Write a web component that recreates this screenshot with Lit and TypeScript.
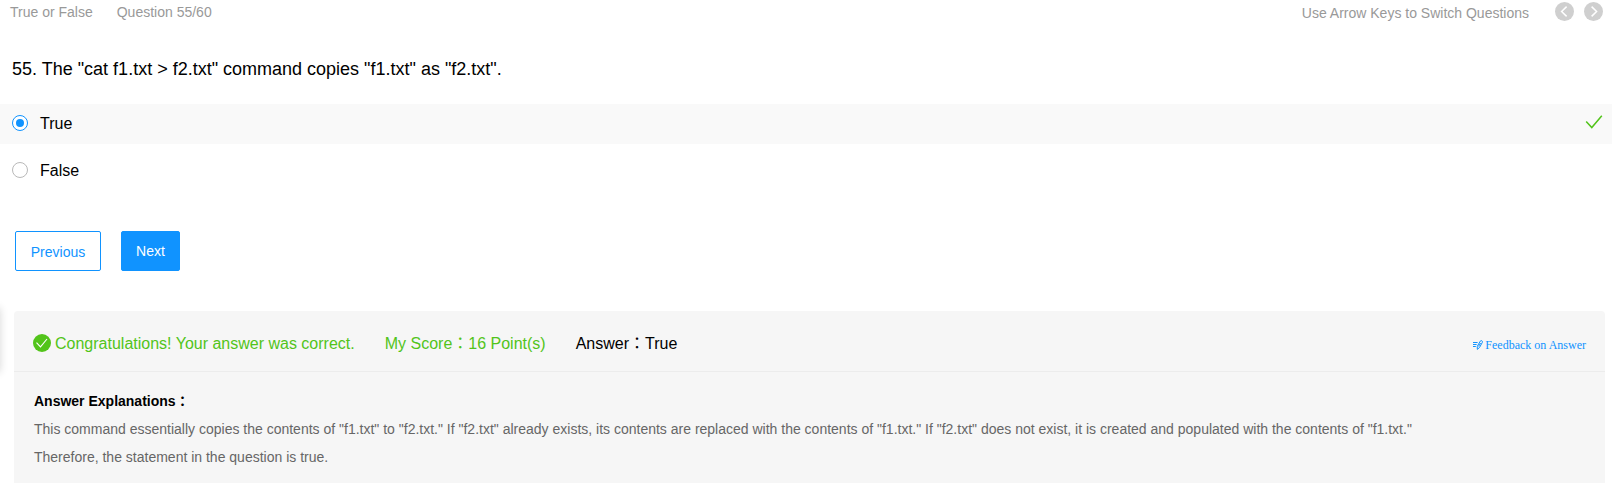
import { LitElement, html, css, svg } from "lit";
import { customElement, property, state } from "lit/decorators.js";

@customElement("answer-option")
class AnswerOption extends LitElement {
  @property() label = "";
  @property({ type: Boolean, reflect: true }) selected = false;
  @property({ type: Boolean }) correct = false;

  static styles = css`
    :host { display: flex; align-items: center; height: 40px; padding: 0 9px 0 12px; cursor: pointer; }
    :host([selected]) { background: #f9f9f9; }
    .radio { box-sizing: border-box; width: 16px; height: 16px; border: 1px solid #b9b9b9; border-radius: 50%;
      background: #fff; display: grid; place-items: center; margin-top: -2px; }
    :host([selected]) .radio { border-color: #1093ff; }
    .dot { width: 8px; height: 8px; border-radius: 50%; background: #1093ff; }
    .label { flex: 1; margin-left: 12px; line-height: 22px; margin-top: -1px; }
    .mark { display: block; margin-top: -4px; }
  `;

  render() {
    return html`
      <span class="radio">${this.selected ? html`<span class="dot"></span>` : null}</span>
      <span class="label">${this.label}</span>
      ${this.correct
        ? html`<svg class="mark" width="18" height="14" viewBox="0 0 18 14" fill="none" stroke="#52c41a" stroke-width="1.5">
            <path d="M1.2 6.4L6.8 12.5L16.8 .8" /></svg>`
        : null}
    `;
  }
}

@customElement("app-root")
class AppRoot extends LitElement {
  @state() private choice = "True";

  static styles = css`
    :host { display: block; height: 483px; overflow: hidden; position: relative; background: #fff; color: #000;
      font: 16px/22px "Liberation Sans", "Noto Sans CJK JP", sans-serif; }
    .top { display: flex; height: 24px; padding: 0 9px 0 10px; font-size: 14px; line-height: 24px; color: #999; }
    .number { flex: 1; margin-left: 24px; }
    .hint { margin-right: 25.5px; padding-top: 1px; }
    .arrow { display: block; margin: 1.5px 0 0; }
    .arrow + .arrow { margin-left: 10.5px; }
    .question { font-size: 18px; line-height: 26px; padding: 32px 12px 22px; }
    .options { display: flex; flex-direction: column; gap: 7px; }
    .actions { display: flex; gap: 20px; padding: 40px 15px; }
    .button { box-sizing: border-box; display: inline-flex; align-items: center; justify-content: center;
      height: 40px; border: 1px solid #1093ff; border-radius: 2px; padding: 0;
      font: 14px/20px "Liberation Sans", sans-serif; color: #1093ff; background: #fff; }
    .previous { padding-top: 2px; width: 86px; }
    .next { color: #fff; background: #1093ff; width: 59px; }
    .panel { margin: 0 7px 0 14px; background: #f6f6f6; border-radius: 4px 4px 0 0; height: 172px; }
    .result { display: flex; align-items: center; height: 60px; padding: 0 19px; border-bottom: 1px solid #ececec; }
    .badge { display: block; margin: 4px 4px 0 0; }
    .good { color: #52c41a; }
    .result span { margin-top: 6px; white-space: nowrap; }
    .score { margin-left: 30px; }
    .answer { margin-left: 30px; flex: 1; }
    .feedback { display: flex; align-items: center; gap: 2px; margin-top: 8px; color: #1093ff;
      font: 12px/16px "Liberation Serif", serif; }
    .feedback .caption { margin: 0; }
    .explain { padding: 15px 20px; font-size: 14px; line-height: 28px; color: #666; }
    .heading { color: #000; font-weight: bold; height: 28px; }
    .line { margin: 0; }
    .drawer { position: absolute; left: -10px; top: 308px; width: 10px; height: 64px;
      box-shadow: 0 0 8px rgba(0, 0, 0, 0.16); }
  `;

  private arrow(points: string) {
    return html`<svg class="arrow" width="19" height="19" viewBox="0 0 19 19">
      <circle cx="9.5" cy="9.5" r="9.5" fill="#cfcfcf" />
      ${svg`<path d=${points} fill="none" stroke="#fff" stroke-width="1.5" />`}
    </svg>`;
  }

  render() {
    return html`
      <header class="top">
        <span>True or False</span><span class="number">Question 55/60</span>
        <span class="hint">Use Arrow Keys to Switch Questions</span>
        ${this.arrow("M11.6 4.6L6.6 9.5L11.6 14.4")}${this.arrow("M7.6 4.6L12.6 9.5L7.6 14.4")}
      </header>
      <div class="question">55. The "cat f1.txt &gt; f2.txt" command copies "f1.txt" as "f2.txt".</div>
      <div class="options">
        ${["True", "False"].map((o) => html`<answer-option .label=${o} ?selected=${this.choice === o}
          ?correct=${o === "True"} @click=${() => (this.choice = o)}></answer-option>`)}
      </div>
      <div class="actions">
        <button class="button previous">Previous</button><button class="button next">Next</button>
      </div>
      <section class="panel">
        <div class="result">
          <svg class="badge" width="18" height="18" viewBox="0 0 18 18">
            <circle cx="9" cy="9" r="9" fill="#52c41a" />
            <path d="M3.5 8.6L7.5 12.9L14 5" fill="none" stroke="#fff" stroke-width="1.1" />
          </svg>
          <span class="good">Congratulations! Your answer was correct.</span>
          <span class="good score">My Score：16 Point(s)</span>
          <span class="answer">Answer：True</span>
          <div class="feedback">
            <svg width="10" height="10" viewBox="0 0 10 10" fill="none" stroke="#1093ff" stroke-width="1">
              <path d="M0 2.5H4.6M0 4.5H3.6M0 6.5H2.8M4.3 6.3L7.3 1.1Q7.9 .3 8.9 .8Q9.8 1.4 9.4 2.3L6.5 7.5L4.3 9.4ZM7.6 3L5.6 6.4" />
            </svg>
            <span class="caption">Feedback on Answer</span>
          </div>
        </div>
        <div class="explain">
          <div class="heading">Answer Explanations：</div>
          <p class="line">This command essentially copies the contents of "f1.txt" to "f2.txt." If "f2.txt" already exists, its contents are replaced with the contents of "f1.txt." If "f2.txt" does not exist, it is created and populated with the contents of "f1.txt."</p>
          <p class="line">Therefore, the statement in the question is true.</p>
        </div>
      </section>
      <div class="drawer"></div>
    `;
  }
}
